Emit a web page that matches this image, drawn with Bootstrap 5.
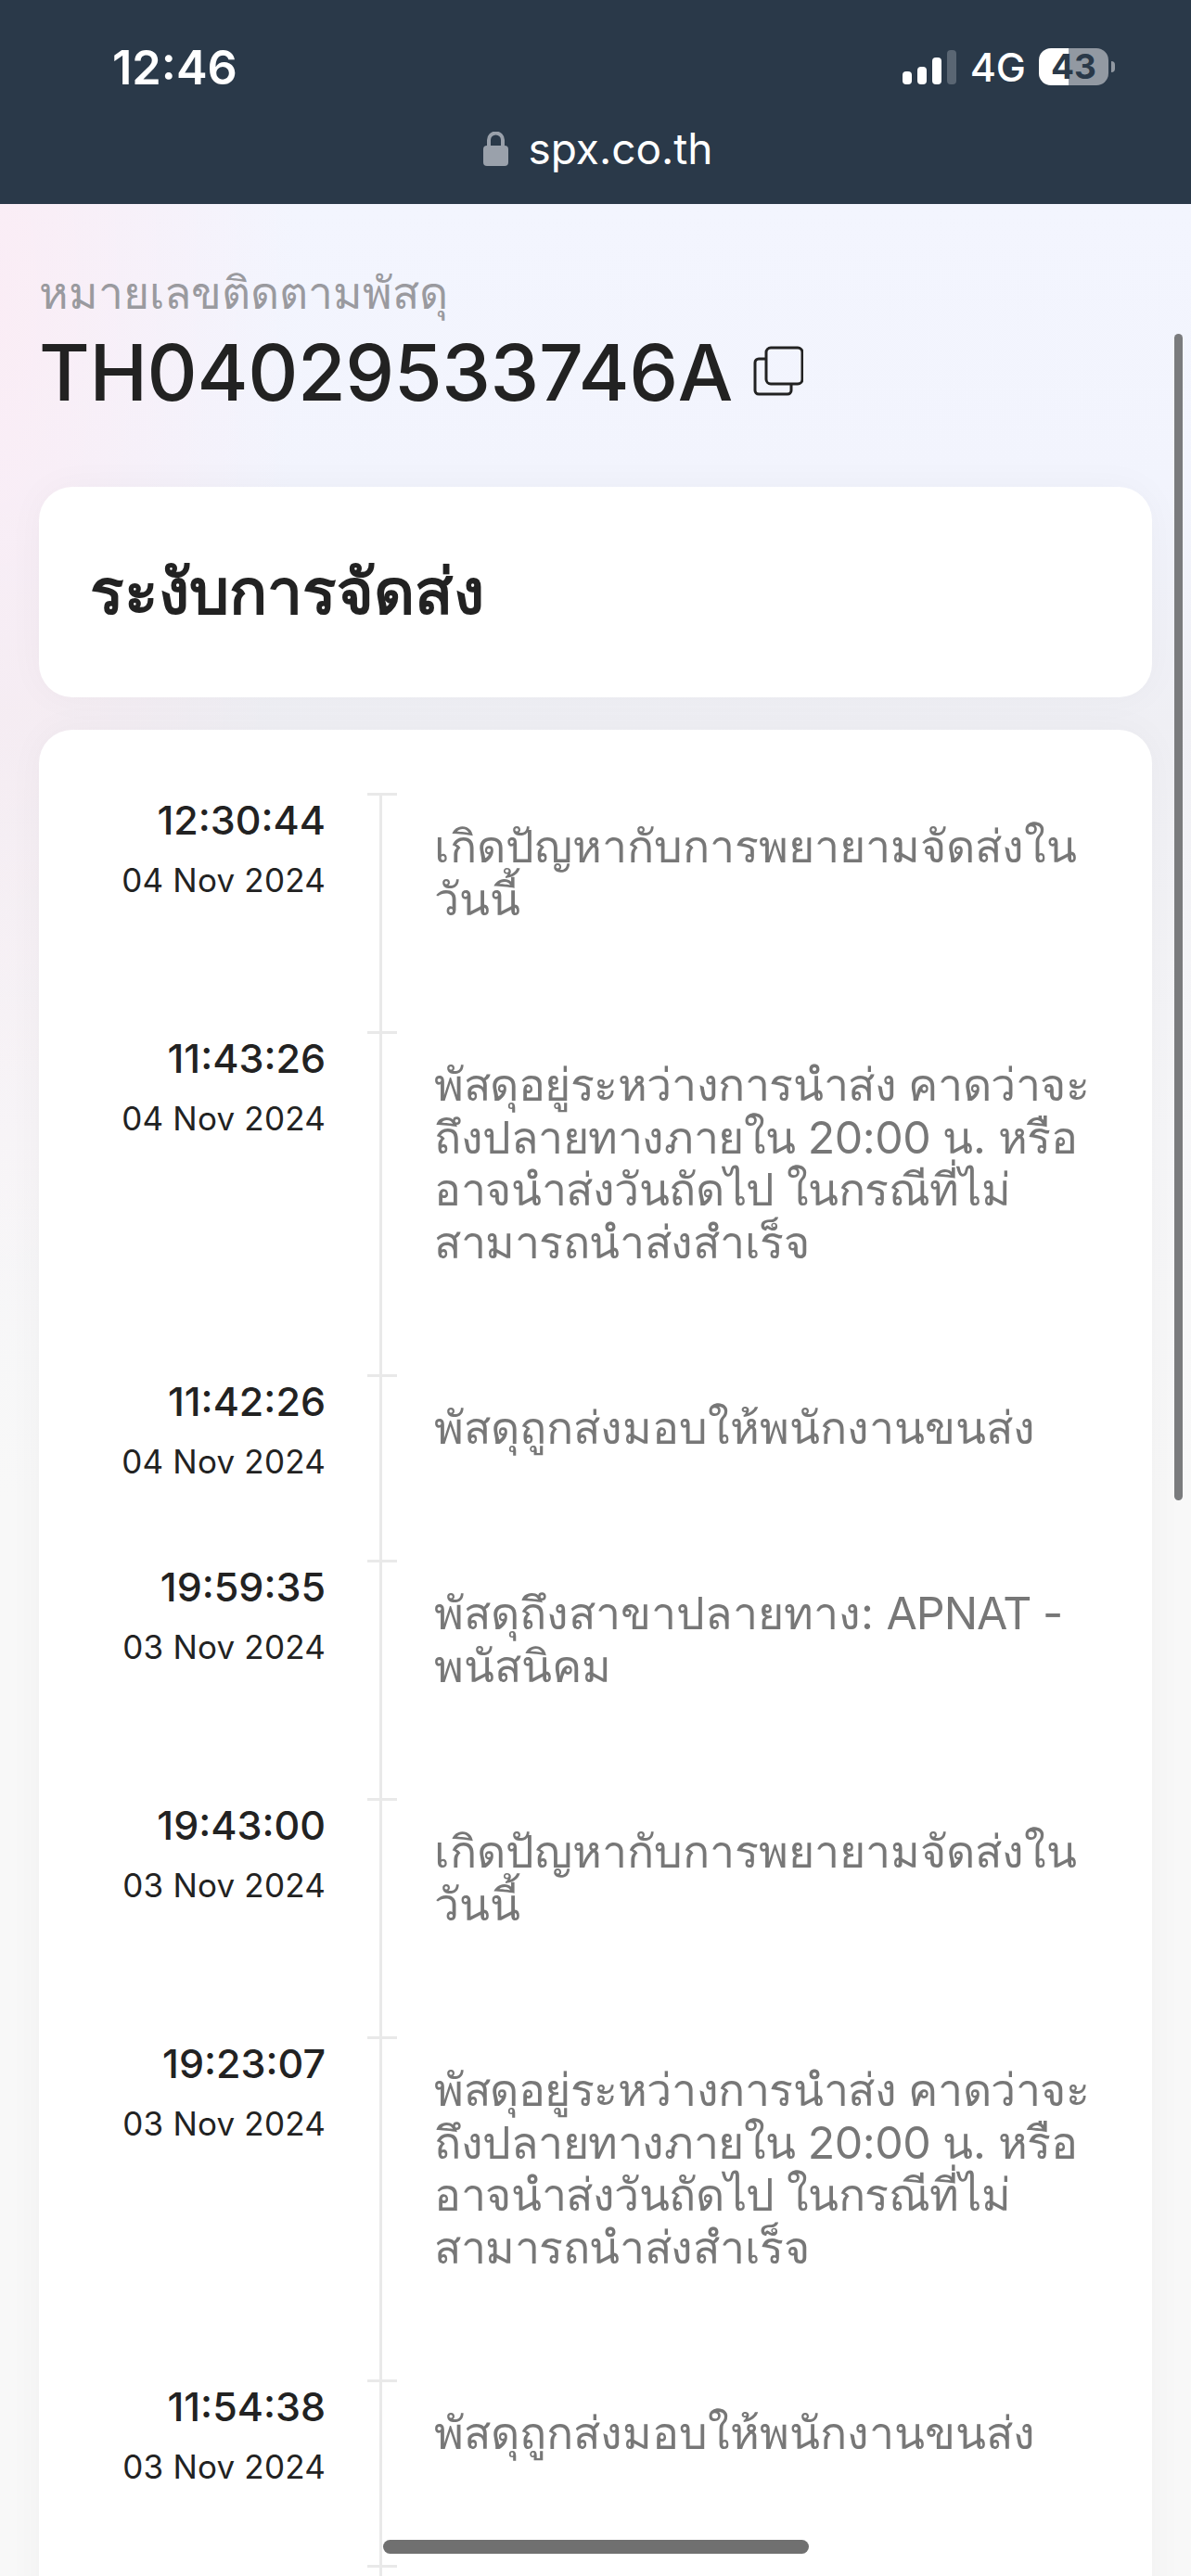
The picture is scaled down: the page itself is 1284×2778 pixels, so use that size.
<!DOCTYPE html>
<html lang="th"><head><meta charset="utf-8"><title>SPX</title>
<link href="https://cdn.jsdelivr.net/npm/bootstrap@5.3.0/dist/css/bootstrap.min.css" rel="stylesheet">
<style>
html,body{height:100%;margin:0}
body{font-family:Inter,"Noto Sans",sans-serif;background:#f8f8f8;color:#222}
.screen{height:2778px;overflow:hidden;position:relative;display:flex;flex-direction:column}
.topbar{background:#2a3949;height:220px;flex:none;color:#fff}
.status-row{height:140px;padding:50px 82px 0 121px}
.clock{font-size:50.5px;font-weight:600;line-height:46px}
.status-right{margin-top:2px}
.signal{gap:6px;height:37px;margin-right:15px}
.signal i{display:block;width:10px;background:#fff;border-radius:4px}
.signal i.b1{height:14px}.signal i.b2{height:19px}.signal i.b3{height:29px}.signal i.b4{height:37px;background:#5a6673}
.net{font-size:43px;font-weight:500;line-height:40px;margin-right:14px}
.batt{width:75px;height:40px;border-radius:13px;background:linear-gradient(90deg,#fff 43%,#9299a2 43%);color:#2a3949;font-size:37px;font-weight:700;line-height:40px}
.batt-cap{width:4px;height:12px;background:#9299a2;border-radius:0 6px 6px 0;margin-left:3px}
.url-row{gap:21px;height:40px;font-size:46px;line-height:40px;padding-left:6px}
.page{flex:1;min-height:0;padding:0 42px;background:
 radial-gradient(ellipse 320px 1150px at 0 100px,rgba(255,232,240,.62),rgba(255,232,240,0)),
 linear-gradient(180deg,#f3f5fe 0,#f2f4fd 300px,#efeff4 560px,#f6f6f8 1000px,#f8f8f8 1400px)}
.track-label{font-size:48px;line-height:56px;color:#9a9a9f;padding-top:68px}
.track-num{gap:22px;font-size:84px;font-weight:450;letter-spacing:-.4px;line-height:92px;margin:12px 0 0 0;color:#222}
.track-num svg{margin-bottom:4px}
.box{background:#fff;border-radius:36px;box-shadow:0 0 40px rgba(0,0,0,.035)}
.status-box{height:227px;margin-top:77px;padding:0 55px 3px;font-size:68px;font-weight:600;color:#222}
.log-box{margin-top:35px;padding-top:68px;min-height:2200px}
.log-row{display:flex}
.log-time{width:309px;flex:none;text-align:right;padding-top:1px}
.log-time .hms{font-size:43px;line-height:56px;font-weight:450;color:#222}
.log-time .dmy{font-size:35px;line-height:50px;margin-top:12px;letter-spacing:.2px;color:#222}
.rail{width:32px;flex:none;margin-left:45px;border-top:3px solid #e9e9e9;background:linear-gradient(#e9e9e9,#e9e9e9) calc(50% - 2px) 0/3px 100% no-repeat}
.log-text{flex:1;padding:30px 60px 54px 40px;font-size:48.3px;line-height:56.5px;color:#777}
.log-tight{letter-spacing:-.45px}
.latin-tight{letter-spacing:-1px}
.h200{height:200px}.h257{height:257px}.h370{height:370px}
.vbar{position:absolute;left:1266px;top:360px;width:9px;height:1258px;background:#7a7b7d;border-radius:5px}
.hbar{position:absolute;left:413px;top:2739px;width:459px;height:15px;background:#707070;border-radius:8px}
</style></head><body>
<div class="screen">
<header class="topbar">
 <div class="status-row d-flex justify-content-between align-items-start">
  <div class="clock">12:46</div>
  <div class="status-right d-flex align-items-center">
   <div class="signal d-flex align-items-end"><i class="b1"></i><i class="b2"></i><i class="b3"></i><i class="b4"></i></div>
   <div class="net">4G</div>
   <div class="batt text-center">43</div><div class="batt-cap"></div>
  </div>
 </div>
 <div class="url-row d-flex justify-content-center align-items-center">
  <svg width="27" height="37" viewBox="0 0 27 37"><path d="M6 16V9a7.5 7.5 0 0 1 15 0v7" fill="none" stroke="#9aa1ab" stroke-width="4"/><rect y="15" width="27" height="22" rx="4" fill="#9aa1ab"/></svg>
  <span>spx.co.th</span>
 </div>
</header>
<main class="page">
 <div class="track-label">หมายเลขติดตามพัสดุ</div>
 <div class="track-num d-flex align-items-center"><span>TH04029533746A</span>
  <svg width="54" height="54" viewBox="0 0 54 54" fill="none" stroke="#222" stroke-width="3"><path d="M14 14H6a4 4 0 0 0-4 4v30a4 4 0 0 0 4 4h31a4 4 0 0 0 4-4v-7"/><rect x="14" y="2" width="39" height="39" rx="5"/></svg>
 </div>
 <section class="box status-box d-flex align-items-center">ระงับการจัดส่ง</section>
 <section class="box log-box">
  <div class="log-row h257"><div class="log-time"><div class="hms">12:30:44</div><div class="dmy">04 Nov 2024</div></div><div class="rail"></div><div class="log-text">เกิดปัญหากับการพยายามจัดส่งใน<br>วันนี้</div></div>
  <div class="log-row h370"><div class="log-time"><div class="hms">11:43:26</div><div class="dmy">04 Nov 2024</div></div><div class="rail"></div><div class="log-text log-tight text-nowrap">พัสดุอยู่ระหว่างการนำส่ง คาดว่าจะ<br>ถึงปลายทางภายใน 20:00 น. หรือ<br>อาจนำส่งวันถัดไป ในกรณีที่ไม่<br>สามารถนำส่งสำเร็จ</div></div>
  <div class="log-row h200"><div class="log-time"><div class="hms">11:42:26</div><div class="dmy">04 Nov 2024</div></div><div class="rail"></div><div class="log-text">พัสดุถูกส่งมอบให้พนักงานขนส่ง</div></div>
  <div class="log-row h257"><div class="log-time"><div class="hms">19:59:35</div><div class="dmy">03 Nov 2024</div></div><div class="rail"></div><div class="log-text">พัสดุถึงสาขาปลายทาง: <span class="latin-tight">APNAT -</span><br>พนัสนิคม</div></div>
  <div class="log-row h257"><div class="log-time"><div class="hms">19:43:00</div><div class="dmy">03 Nov 2024</div></div><div class="rail"></div><div class="log-text">เกิดปัญหากับการพยายามจัดส่งใน<br>วันนี้</div></div>
  <div class="log-row h370"><div class="log-time"><div class="hms">19:23:07</div><div class="dmy">03 Nov 2024</div></div><div class="rail"></div><div class="log-text log-tight text-nowrap">พัสดุอยู่ระหว่างการนำส่ง คาดว่าจะ<br>ถึงปลายทางภายใน 20:00 น. หรือ<br>อาจนำส่งวันถัดไป ในกรณีที่ไม่<br>สามารถนำส่งสำเร็จ</div></div>
  <div class="log-row h200"><div class="log-time"><div class="hms">11:54:38</div><div class="dmy">03 Nov 2024</div></div><div class="rail"></div><div class="log-text">พัสดุถูกส่งมอบให้พนักงานขนส่ง</div></div>
  <div class="log-row h200"><div class="log-time"></div><div class="rail"></div><div class="log-text"></div></div>
 </section>
</main>
<div class="vbar"></div><div class="hbar"></div>
</div>
<script src="https://cdn.jsdelivr.net/npm/bootstrap@5.3.0/dist/js/bootstrap.bundle.min.js"></script>
</body></html>
